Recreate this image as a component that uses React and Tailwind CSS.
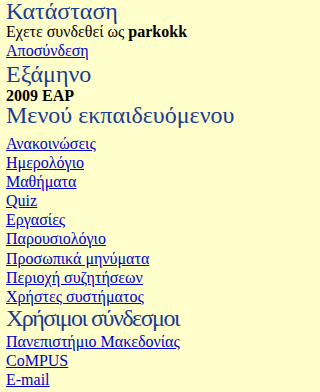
export default function App() {
  const h = "text-[24px] text-[#1b3c90] font-normal whitespace-nowrap";
  const a = "text-[#0000cc] underline text-[16px] block w-fit whitespace-nowrap";
  const menu = ["Ανακοινώσεις","Ημερολόγιο","Μαθήματα","Quiz","Εργασίες","Παρουσιολόγιο","Προσωπικά μηνύματα","Περιοχή συζητήσεων","Χρήστες συστήματος"];
  const links = ["Πανεπιστήμιο Μακεδονίας","CoMPUS","E-mail"];
  return (
    <div className="min-h-screen w-full bg-[#ffffcc] px-[6px] overflow-hidden" style={{fontFamily: '"Liberation Serif", serif'}}>
      <h2 className={h + " leading-[22px]"}>Κατάσταση</h2>
      <div className="text-[16px] leading-[18px] text-black mt-[1px] whitespace-nowrap">Εχετε συνδεθεί ως <b>parkokk</b></div>
      <a href="#" className={a + " leading-[19px]"}>Αποσύνδεση</a>
      <h2 className={h + " leading-[22px] mt-[3px]"}>Εξάμηνο</h2>
      <div className="text-[16px] leading-[16px] text-black font-bold mt-[3px]">2009 EAP</div>
      <h2 className={h + " leading-[22px]"}>Μενού εκπαιδευόμενου</h2>
      <nav className="mt-[8px] flex flex-col">
        {menu.map(m => <a key={m} href="#" className={a + " leading-[19.1px]"}>{m}</a>)}
      </nav>
      <h2 className={h + " leading-[22px] mt-[1px] tracking-[-1.5px]"}>Χρήσιμοι σύνδεσμοι</h2>
      <nav className="mt-[3px] flex flex-col">
        {links.map(m => <a key={m} href="#" className={a + " leading-[19px]"}>{m}</a>)}
      </nav>
    </div>
  );
}
